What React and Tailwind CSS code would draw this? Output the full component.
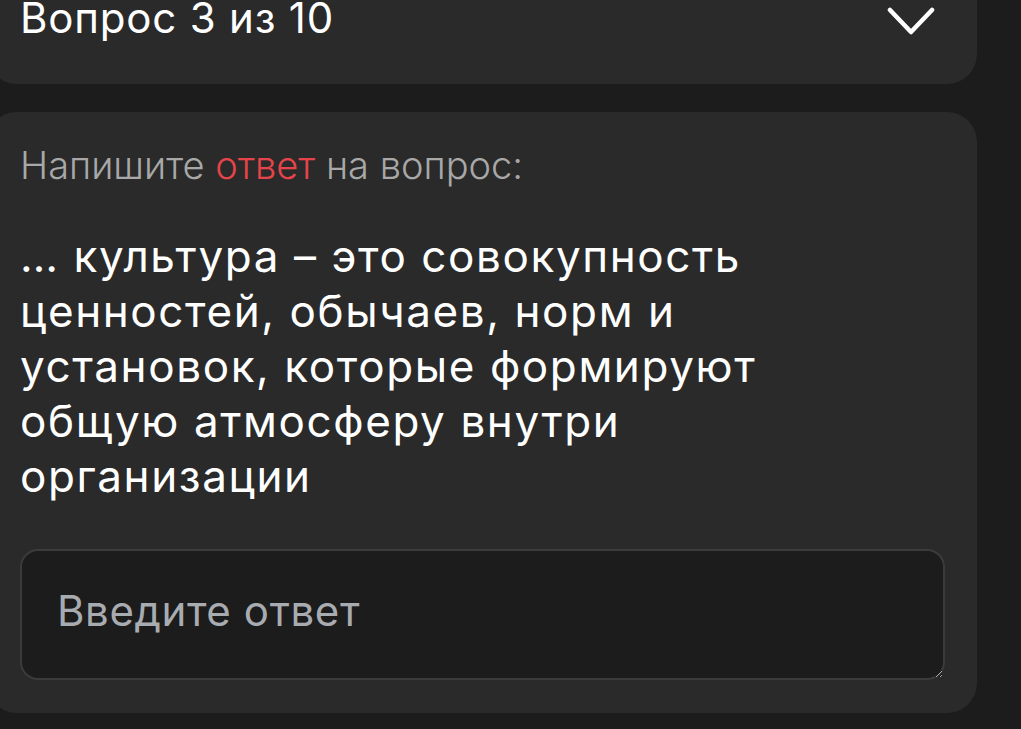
export default function App() {
  return (
    <div className="min-h-[729px] w-[1021px] overflow-hidden bg-[#1c1c1c] text-white" style={{ fontFamily: "Inter, 'Noto Sans', sans-serif" }}>
      <div className="ml-[-13px] mt-[-40px] flex h-[124px] w-[990px] items-end justify-between rounded-[30px] bg-[#2a2a2a] pb-[45px] pl-[33px] pr-[42px]">
        <span className="text-[42px] leading-none tracking-[0.8px]">Вопрос 3 из 10</span>
        <svg width="48" height="28" viewBox="0 0 48 28" fill="none" stroke="white" strokeWidth="4.5" strokeLinecap="round" strokeLinejoin="round" className="mb-[4px]">
          <path d="M3 3 L24 25 L45 3" />
        </svg>
      </div>

      <div className="ml-[-13px] mt-[28px] w-[990px] rounded-[30px] bg-[#2a2a2a] px-[33px] pb-[33px] pt-[25px]">
        <p className="text-[38px] font-light leading-[56px] text-[#a8a8a8]">
          Напишите <span className="text-[#e5444b]">ответ</span> на вопрос:
        </p>
        <p className="mt-[36px] text-[44px] leading-[55px] tracking-[1.6px] text-white">
          … культура – это совокупность<br />
          ценностей, обычаев, норм и<br />
          установок, которые формируют<br />
          общую атмосферу внутри<br />
          организации
        </p>
        <textarea
          placeholder="Введите ответ"
          className="mt-[45px] block h-[131px] w-[925px] rounded-[18px] border-2 border-[#3b3b3b] bg-[#1c1c1c] pb-[20px] pl-[35px] pr-[35px] pt-[32px] text-[42px] leading-[56px] tracking-[0.6px] text-white outline-none placeholder:text-[#a8abb0]"
        />
      </div>
    </div>
  );
}
